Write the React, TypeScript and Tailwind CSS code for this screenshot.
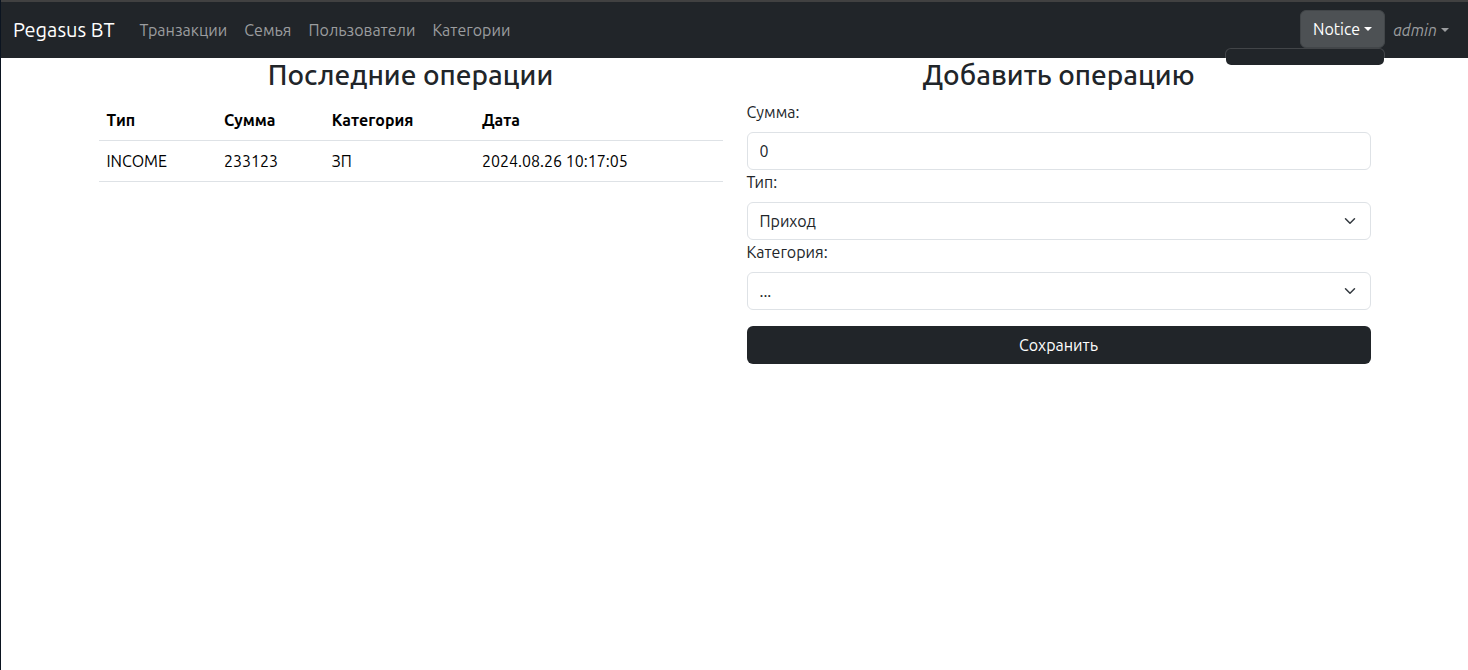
import type { ReactNode } from "react";

const links = ["Транзакции", "Семья", "Пользователи", "Категории"];

const operations = [
  { type: "INCOME", amount: "233123", category: "ЗП", date: "2024.08.26 10:17:05" },
];

function Caret() {
  return (
    <span
      aria-hidden="true"
      className="ml-1 inline-block border-x-4 border-t-4 border-x-transparent border-t-current align-[4px]"
    />
  );
}

function Navbar() {
  return (
    <nav className="flex h-[58px] items-center border-t-2 border-[#414141] bg-[#212529] pr-[11px] pl-3">
      <a href="#" className="mr-[25px] text-xl leading-[30px] text-white">
        Pegasus BT
      </a>
      <ul className="flex gap-[17px]">
        {links.map((name) => (
          <li key={name}>
            <a href="#" className="text-[#9b9d9f]">
              {name}
            </a>
          </li>
        ))}
      </ul>
      <div className="ml-auto flex items-center">
        <div className="relative pb-0.5">
          <button
            type="button"
            aria-expanded="true"
            className="block h-[38px] rounded-md border border-[#424649] bg-[#4d5154] px-3 text-white"
          >
            Notice
            <Caret />
          </button>
          <div className="absolute top-full right-0 -mt-0.5 h-[18px] w-40 rounded-md border border-white/15 bg-[#212529] bg-clip-padding" />
        </div>
        <a href="#" className="px-2 text-[#9b9d9f] italic">
          admin
          <Caret />
        </a>
      </div>
    </nav>
  );
}

function Heading({ children }: { children: ReactNode }) {
  return (
    <h3 className="mb-2 text-center text-[28px] leading-[34px] font-[540] text-[#212529]">
      {children}
    </h3>
  );
}

function Operations() {
  return (
    <section>
      <Heading>Последние операции</Heading>
      <table className="w-full border-collapse text-left text-black">
        <thead>
          <tr className="border-b border-[#dee2e6]">
            <th className="p-2 font-bold">Тип</th>
            <th className="p-2 font-bold">Сумма</th>
            <th className="p-2 font-bold">Категория</th>
            <th className="p-2 font-bold">Дата</th>
          </tr>
        </thead>
        <tbody>
          {operations.map((row) => (
            <tr key={row.date} className="border-b border-[#dee2e6]">
              <td className="p-2">{row.type}</td>
              <td className="p-2">{row.amount}</td>
              <td className="p-2">{row.category}</td>
              <td className="p-2">{row.date}</td>
            </tr>
          ))}
        </tbody>
      </table>
    </section>
  );
}

function SelectField({ id, label, options }: { id: string; label: string; options: string[] }) {
  return (
    <>
      <label htmlFor={id} className="mb-2 block">
        {label}
      </label>
      <div className="relative">
        <select
          id={id}
          className="block h-[38px] w-full appearance-none rounded-md border border-[#dee2e6] bg-white pr-9 pl-3"
        >
          {options.map((option) => (
            <option key={option}>{option}</option>
          ))}
        </select>
        <svg
          aria-hidden="true"
          viewBox="0 0 16 16"
          className="pointer-events-none absolute top-[13px] right-[13px] h-3 w-4"
          fill="none"
          stroke="#343a40"
          strokeWidth="2"
          strokeLinecap="round"
          strokeLinejoin="round"
        >
          <path d="m2 5 6 6 6-6" />
        </svg>
      </div>
    </>
  );
}

function OperationForm() {
  return (
    <section>
      <Heading>Добавить операцию</Heading>
      <form onSubmit={(event) => event.preventDefault()}>
        <label htmlFor="amount" className="mb-2 block">
          Сумма:
        </label>
        <input
          id="amount"
          inputMode="numeric"
          defaultValue="0"
          className="block h-[38px] w-full rounded-md border border-[#dee2e6] bg-white px-3"
        />
        <SelectField id="type" label="Тип:" options={["Приход", "Расход"]} />
        <SelectField id="category" label="Категория:" options={["...", "ЗП"]} />
        <button type="submit" className="mt-4 block h-[38px] w-full rounded-md bg-[#212529] text-white">
          Сохранить
        </button>
      </form>
    </section>
  );
}

export default function App() {
  return (
    <div className="min-h-screen border-l border-[#0b1420] bg-white font-['Ubuntu','Noto_Sans',sans-serif] text-base leading-6 text-[#212529]">
      <Navbar />
      <main className="mx-auto grid max-w-[1272px] grid-cols-2 gap-6">
        <Operations />
        <OperationForm />
      </main>
    </div>
  );
}
